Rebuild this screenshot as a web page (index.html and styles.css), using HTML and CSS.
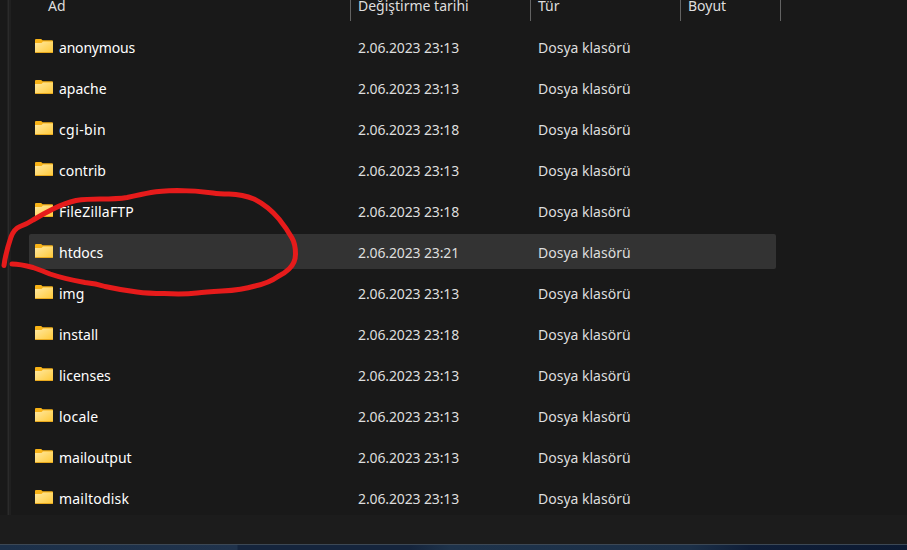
FILE: index.html
```html
<!DOCTYPE html>
<html lang="tr">
<head>
<meta charset="utf-8">
<title>xampp</title>
<link rel="stylesheet" href="styles.css">
</head>
<body>
<svg class="defs" width="0" height="0" aria-hidden="true">
  <defs>
    <linearGradient id="paper" x1="0" y1="0" x2="1" y2="1"><stop offset="0" stop-color="#ffe9a3"/><stop offset="1" stop-color="#ffc937"/></linearGradient>
    <symbol id="folder" viewBox="0 0 18 14">
      <path d="M0 1Q0 0 1 0H6.2L7.5 1.200H17Q18 1.200 18 2.200V8H0Z" fill="#f8b317"/>
      <path d="M0 4H6.500L8 2.400H18V13Q18 14 17 14H1Q0 14 0 13Z" fill="url(#paper)"/>
      <path d="M0 13H18Q18 14 17 14H1Q0 14 0 13Z" fill="#e9a91e"/>
    </symbol>
  </defs>
</svg>
<main class="window">
  <div class="content">
    <div class="divider"></div>
    <div class="listing">
      <div class="header"><span class="col-name">Ad</span><span class="col-date">Değiştirme tarihi</span><span class="col-type">Tür</span><span class="col-size">Boyut</span></div>
      <div class="rows">
        <div class="row"><svg class="icon"><use href="#folder"/></svg><span class="name tight">anonymous</span><span class="date">2.06.2023 23:13</span><span class="type">Dosya klasörü</span></div>
        <div class="row"><svg class="icon"><use href="#folder"/></svg><span class="name">apache</span><span class="date">2.06.2023 23:13</span><span class="type">Dosya klasörü</span></div>
        <div class="row"><svg class="icon"><use href="#folder"/></svg><span class="name wider">cgi-bin</span><span class="date">2.06.2023 23:18</span><span class="type">Dosya klasörü</span></div>
        <div class="row"><svg class="icon"><use href="#folder"/></svg><span class="name">contrib</span><span class="date">2.06.2023 23:13</span><span class="type">Dosya klasörü</span></div>
        <div class="row"><svg class="icon"><use href="#folder"/></svg><span class="name wide">FileZillaFTP</span><span class="date">2.06.2023 23:18</span><span class="type">Dosya klasörü</span></div>
        <div class="row selected"><svg class="icon"><use href="#folder"/></svg><span class="name">htdocs</span><span class="date">2.06.2023 23:21</span><span class="type">Dosya klasörü</span></div>
        <div class="row"><svg class="icon"><use href="#folder"/></svg><span class="name">img</span><span class="date">2.06.2023 23:13</span><span class="type">Dosya klasörü</span></div>
        <div class="row"><svg class="icon"><use href="#folder"/></svg><span class="name">install</span><span class="date">2.06.2023 23:18</span><span class="type">Dosya klasörü</span></div>
        <div class="row"><svg class="icon"><use href="#folder"/></svg><span class="name">licenses</span><span class="date">2.06.2023 23:13</span><span class="type">Dosya klasörü</span></div>
        <div class="row"><svg class="icon"><use href="#folder"/></svg><span class="name wide">locale</span><span class="date">2.06.2023 23:13</span><span class="type">Dosya klasörü</span></div>
        <div class="row"><svg class="icon"><use href="#folder"/></svg><span class="name">mailoutput</span><span class="date">2.06.2023 23:13</span><span class="type">Dosya klasörü</span></div>
        <div class="row"><svg class="icon"><use href="#folder"/></svg><span class="name wide">mailtodisk</span><span class="date">2.06.2023 23:13</span><span class="type">Dosya klasörü</span></div>
      </div>
    </div>
  </div>
  <div class="statusbar"></div>
  <div class="desktop"></div>
  <svg class="marker" viewBox="0 0 907 550" aria-hidden="true">
    <path d="M4 265.500C5 257 8 246 11 237Q14 229 20 226.500Q27 224 33 220Q43 214 53 209Q65 203 76 200.500Q86 199 100 199Q118 199 127 197.500Q143 194 151 192.500Q160 191 177 190.500Q196 190.500 213 193Q219 194 229 194Q243 194.500 254 199Q268 206 279 219Q287 229 292 238Q295.500 244 295.500 254Q295.500 263 289 269Q285 273 278 276.500Q269 283 255 286Q242 290 222 291Q205 292 197 293Q183 294.500 164 293.500Q148 293.500 137 292Q121 290 105 286.500Q96 283.500 85 282.500Q65 279 50 274Q43 271 33 267.500Q20 264 12 264"/>
  </svg>
</main>
</body>
</html>
```
FILE: styles.css
```css
* { box-sizing: border-box; }
body {
  margin: 0;
  background: #191919;
  color: #dedede;
  font: 14px/20px "Noto Sans", "Open Sans", sans-serif;
}
.defs { position: absolute; }
.window {
  position: relative;
  display: flex;
  flex-direction: column;
  width: 907px;
  height: 550px;
  overflow: hidden;
}
.content { display: flex; height: 515px; }
.divider {
  width: 4px;
  margin-left: 7px;
  background: #202020;
  border-left: 1px solid #212121;
  box-shadow: inset 1px 0 #2b2b2b;
}
.listing { width: 770px; margin-left: 18px; }
.header {
  display: grid;
  grid-template-columns: 322px 180px 150px 100px;
  height: 21px;
  line-height: 12px;
}
.header > span { padding-left: 7px; border-right: 1px solid #636363; }
.header .col-name { padding-left: 19px; }
.rows { display: grid; gap: 6px; margin-top: 8px; }
.row {
  display: grid;
  grid-template-columns: 24px 299px 180px 1fr;
  align-items: center;
  width: 747px;
  height: 35px;
  padding-left: 6px;
  border: 1px solid transparent;
  border-left: 0;
  border-radius: 2px;
}
.row span { padding-top: 2px; }
.name { color: #fff; }
.date { letter-spacing: -0.13px; }
.tight { letter-spacing: -0.2px; }
.wide { letter-spacing: 0.2px; }
.wider { letter-spacing: 0.4px; }
.selected { background: #333; }
.icon { display: block; width: 18px; height: 14px; margin-bottom: 1px; }
.statusbar { height: 29px; background: #1c1c1c; }
.desktop {
  height: 6px;
  border-top: 1px solid #3c4855;
  background: linear-gradient(90deg, #1c3049 0, #20334c 237px, #15253d 238px, #15253d 410px, #1e334b 450px, #1c3048 690px, #0f1e38 750px, #0c1a32 100%);
}
.marker { position: absolute; inset: 0; width: 907px; height: 550px; }
.marker path {
  fill: none;
  stroke: #e61b1b;
  stroke-width: 5;
  stroke-linecap: round;
  stroke-linejoin: round;
}
```
